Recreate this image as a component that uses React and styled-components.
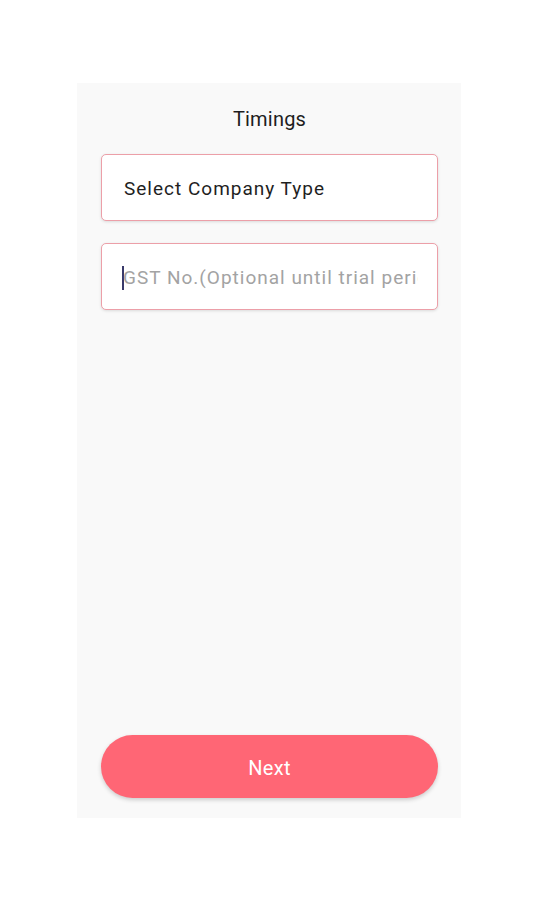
import React from "react";
import styled, { createGlobalStyle } from "styled-components";

const Global = createGlobalStyle`
  html, body { margin: 0; padding: 0; background: #ffffff; }
  body { font-family: Roboto, "Noto Sans", Arial, sans-serif; }
`;

const Page = styled.div`
  width: 540px;
  height: 900px;
  padding: 83px 0 0 77px;
  box-sizing: border-box;
`;

const Panel = styled.div`
  width: 384px;
  height: 735px;
  background: #f9f9f9;
  box-sizing: border-box;
  padding: 0 23px 20px 24px;
  display: flex;
  flex-direction: column;
`;

const Title = styled.div`
  height: 71px;
  display: flex;
  align-items: center;
  justify-content: center;
  font-size: 20px;
  letter-spacing: 0.2px;
  color: #1e1e1e;
  box-sizing: border-box;
`;

const Fields = styled.div`
  display: flex;
  flex-direction: column;
  gap: 22px;
`;

const Field = styled.div`
  height: 67px;
  box-sizing: border-box;
  border: 1px solid #ec9fa8;
  border-radius: 5px;
  background: #ffffff;
  box-shadow: 0 1px 3px rgba(0, 0, 0, 0.12);
  display: flex;
  align-items: center;
  padding: 2px 19px 0 20px;
  overflow: hidden;
`;

const FieldText = styled.span`
  font-size: 19px;
  letter-spacing: 1px;
  white-space: nowrap;
  overflow: hidden;
  padding-left: ${(p) => (p.$placeholder ? "0" : "2px")};
  color: ${(p) => (p.$placeholder ? "#a3a3a3" : "#1f1f1f")};
  display: flex;
  align-items: center;
`;

const Caret = styled.span`
  display: inline-block;
  width: 2px;
  height: 24px;
  background: #3a3a6a;
  margin-right: -1px;
  flex: none;
`;

const Spacer = styled.div`
  flex: 1;
`;

const Button = styled.button`
  height: 63px;
  border: none;
  border-radius: 32px;
  background: #ff6675;
  color: #ffffff;
  font-family: Roboto, "Noto Sans", Arial, sans-serif;
  font-size: 20px;
  letter-spacing: 0.3px;
  padding-top: 3px;
  box-shadow: 0 2px 4px rgba(0, 0, 0, 0.18);
  cursor: pointer;
`;

export default function App() {
  return (
    <>
      <Global />
      <Page>
        <Panel>
          <Title>Timings</Title>
          <Fields>
            <Field>
              <FieldText>Select Company Type</FieldText>
            </Field>
            <Field>
              <FieldText $placeholder>
                <Caret />
                GST No.(Optional until trial period)
              </FieldText>
            </Field>
          </Fields>
          <Spacer />
          <Button>Next</Button>
        </Panel>
      </Page>
    </>
  );
}
